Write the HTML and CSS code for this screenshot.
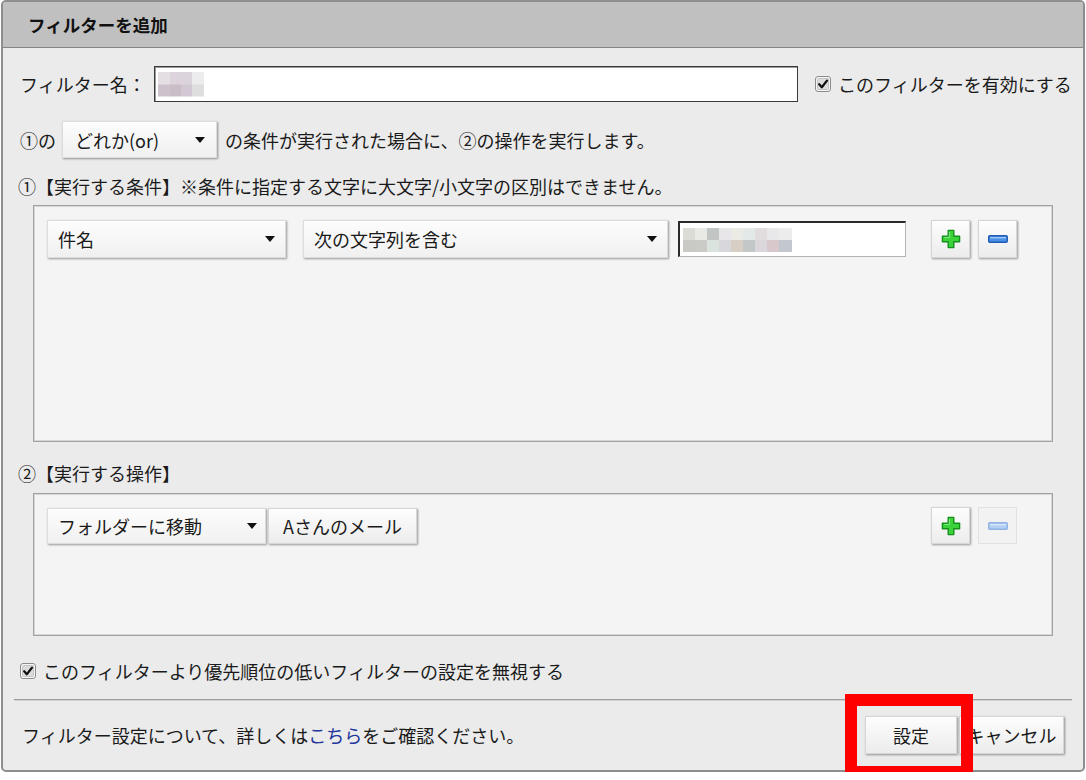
FILE: index.html
```html
<!DOCTYPE html>
<html lang="ja">
<head>
<meta charset="utf-8">
<title>フィルターを追加</title>
<link rel="stylesheet" href="styles.css">
</head>
<body>
<div class="dialog">
  <div class="dialog-header"><h1 class="dialog-title">フィルターを追加</h1></div>
  <div class="dialog-body">
    <div class="row row-name">
      <span class="name-label">フィルター名：</span>
      <div class="name-input"><span class="blur blur-name"></span></div>
      <span class="check check-enable">
        <svg class="checkbox" viewBox="0 0 16 16" width="16" height="16"><rect x="0.5" y="0.5" width="15" height="15" rx="2.5" fill="#f6f6f6" stroke="#8c8c8c"/><rect x="2.5" y="2.5" width="11" height="11" rx="1" fill="#dcdcdc" stroke="#c4c4c4"/><path d="M4.2 8.3 L6.8 11.2 L12 4.6" fill="none" stroke="#111" stroke-width="2.3" stroke-linecap="round" stroke-linejoin="round"/></svg>
        <span>このフィルターを有効にする</span>
      </span>
    </div>
    <div class="row row-mode">
      <span class="mode-prefix">①の</span>
      <div class="select select-mode"><span>どれか(or)</span><i class="caret"></i></div>
      <span class="mode-text">の条件が実行された場合に、②の操作を実行します。</span>
    </div>
    <div class="section-label section-cond">①【実行する条件】※条件に指定する文字に大文字/小文字の区別はできません。</div>
    <div class="box box-cond">
      <div class="rule-row">
        <div class="select select-field"><span>件名</span><i class="caret"></i></div>
        <div class="select select-op"><span>次の文字列を含む</span><i class="caret"></i></div>
        <div class="cond-input"><span class="blur blur-cond"></span></div>
        <div class="icon-buttons">
          <button class="icon-btn" type="button" aria-label="追加"><svg viewBox="0 0 20 20" width="20" height="20"><path d="M7.2 1.4h5.6v5.8h5.8v5.6h-5.8v5.8h-5.6v-5.8h-5.8v-5.6h5.8z" fill="#3ad33a" stroke="#15901a" stroke-width="1.4" stroke-linejoin="round"/><path d="M8.4 3v5.4h-5.2" fill="none" stroke="#8af08a" stroke-width="0.9"/></svg></button>
          <button class="icon-btn" type="button" aria-label="削除"><svg viewBox="0 0 20 8" width="20" height="8"><rect x="0.7" y="0.7" width="18.6" height="6.6" rx="1.2" fill="#4a90e6" stroke="#1f5cb4" stroke-width="1.4"/><rect x="2" y="2" width="16" height="1.4" fill="#9cc6f6"/></svg></button>
        </div>
      </div>
    </div>
    <div class="section-label section-act">②【実行する操作】</div>
    <div class="box box-act">
      <div class="rule-row">
        <div class="select select-action"><span>フォルダーに移動</span><i class="caret"></i></div>
        <button class="btn folder-btn" type="button">Aさんのメール</button>
        <div class="icon-buttons">
          <button class="icon-btn" type="button" aria-label="追加"><svg viewBox="0 0 20 20" width="20" height="20"><path d="M7.2 1.4h5.6v5.8h5.8v5.6h-5.8v5.8h-5.6v-5.8h-5.8v-5.6h5.8z" fill="#3ad33a" stroke="#15901a" stroke-width="1.4" stroke-linejoin="round"/><path d="M8.4 3v5.4h-5.2" fill="none" stroke="#8af08a" stroke-width="0.9"/></svg></button>
          <button class="icon-btn icon-btn-disabled" type="button" aria-label="削除" disabled><svg viewBox="0 0 20 8" width="20" height="8"><rect x="0.7" y="0.7" width="18.6" height="6.6" rx="1.2" fill="#b3cff3" stroke="#8eb2e2" stroke-width="1.4"/><rect x="2" y="2" width="16" height="1.4" fill="#d6e6fa"/></svg></button>
        </div>
      </div>
    </div>
    <div class="row row-ignore">
      <span class="check">
        <svg class="checkbox" viewBox="0 0 16 16" width="16" height="16"><rect x="0.5" y="0.5" width="15" height="15" rx="2.5" fill="#f6f6f6" stroke="#8c8c8c"/><rect x="2.5" y="2.5" width="11" height="11" rx="1" fill="#dcdcdc" stroke="#c4c4c4"/><path d="M4.2 8.3 L6.8 11.2 L12 4.6" fill="none" stroke="#111" stroke-width="2.3" stroke-linecap="round" stroke-linejoin="round"/></svg>
        <span>このフィルターより優先順位の低いフィルターの設定を無視する</span>
      </span>
    </div>
    <div class="divider"></div>
    <div class="footer">
      <p class="help">フィルター設定について、詳しくは<a class="help-link" href="#">こちら</a>をご確認ください。</p>
      <div class="footer-buttons">
        <span class="ok-wrap">
          <button class="btn ok-btn" type="button">設定</button>
          <span class="highlight"></span>
        </span>
        <button class="btn cancel-btn" type="button">キャンセル</button>
      </div>
    </div>
  </div>
</div>
</body>
</html>
```
FILE: styles.css
```css
html, body {
  margin: 0;
  padding: 0;
  background: #ffffff;
}

body {
  font-family: "Noto Sans CJK JP", "Noto Sans", sans-serif;
  font-size: 18px;
  color: #1a1a1a;
}

button {
  font-family: inherit;
  font-size: inherit;
  color: inherit;
  padding: 0;
  margin: 0;
}

.dialog {
  position: relative;
  margin-left: 1px;
  width: 1084px;
  box-sizing: border-box;
  border: 2px solid #8e8e8e;
  border-radius: 5px;
  background: #ebebeb;
}

.dialog-header {
  height: 45px;
  background: #c0c0c0;
  border-bottom: 1px solid #858585;
  border-radius: 3px 3px 0 0;
  display: flex;
  align-items: center;
  padding-left: 25px;
}

.dialog-title {
  margin: 0;
  font-size: 17.5px;
  font-weight: bold;
  color: #111;
  line-height: 24px;
}

.dialog-body {
  padding: 0 11px 16px;
}

.row {
  display: flex;
  align-items: center;
  padding-left: 6px;
}

.row-name {
  margin-top: 18px;
  height: 36px;
}

.name-label {
  width: 134px;
  flex: none;
}

.name-input {
  width: 644px;
  height: 36px;
  box-sizing: border-box;
  border: 1px solid #3a3a3a;
  box-shadow: inset 1px 1px 0 #9a9a9a;
  background: #fff;
  display: flex;
  align-items: center;
  padding-left: 3px;
}

.blur {
  display: block;
}

.blur-name {
  width: 46px;
  height: 25px;
  background:
    linear-gradient(to right, #e3dfe3 0 12px, #dcd3dc 12px 23px, #dcd4dd 23px 34px, #ececee 34px 46px) top / 100% 50% no-repeat,
    linear-gradient(to right, #cdc2cc 0 12px, #c9bdc8 12px 23px, #d2c8d3 23px 34px, #dedede 34px 46px) bottom / 100% 50% no-repeat;
}

.check {
  display: flex;
  align-items: center;
}

.check-enable {
  margin-left: 17px;
}

.check-enable .checkbox {
  margin-right: 7px;
}

.checkbox {
  flex: none;
  display: block;
}

.row-mode {
  margin-top: 19px;
  height: 37px;
}

.mode-prefix {
  width: 42px;
  flex: none;
}

.select {
  display: flex;
  align-items: center;
  justify-content: space-between;
  box-sizing: border-box;
  background: linear-gradient(#fdfdfd, #f0f0f0);
  border: 1px solid #dcdcdc;
  box-shadow: 1px 1px 2px rgba(0, 0, 0, 0.38);
  padding: 0 10px 0 10px;
  flex: none;
}

.caret {
  width: 0;
  height: 0;
  border-left: 5px solid transparent;
  border-right: 5px solid transparent;
  border-top: 6px solid #111;
  flex: none;
}

.select-mode {
  width: 155px;
  height: 37px;
  padding-left: 12px;
  padding-right: 11px;
}

.mode-text {
  margin-left: 8px;
}

.section-label {
  height: 24px;
  line-height: 24px;
  padding-left: 4px;
  white-space: nowrap;
}

.section-cond {
  margin-top: 16px;
}

.section-act {
  margin-top: 19px;
}

.box {
  margin-left: 19px;
  width: 1020px;
  box-sizing: border-box;
  border: 1px solid #a2a2a2;
  box-shadow: inset 0 0 0 1px #d6d6d6;
  background: #f4f4f4;
}

.box-cond {
  margin-top: 7px;
  height: 237px;
}

.box-act {
  margin-top: 8px;
  height: 143px;
}

.rule-row {
  display: flex;
  align-items: center;
  padding: 14px 35px 0 13px;
}

.select-field {
  width: 239px;
  height: 38px;
}

.select-op {
  width: 365px;
  height: 38px;
  margin-left: 17px;
}

.cond-input {
  margin-left: 10px;
  width: 228px;
  height: 36px;
  box-sizing: border-box;
  border-style: solid;
  border-width: 2px 1px 1px 2px;
  border-color: #2a2a2a #b4b4b4 #b4b4b4 #2a2a2a;
  background: #fff;
  display: flex;
  align-items: center;
  padding-left: 3px;
}

.blur-cond {
  width: 109px;
  height: 24px;
  background:
    linear-gradient(to right, #dcdcd7 0 12px, #e9e9e6 12px 24px, #c1c5c3 24px 36px, #e8e6e8 36px 48px, #eceae5 48px 60px, #e3e8e8 60px 72px, #e1dcdd 72px 84px, #e8e8ea 84px 96px, #ececec 96px 109px) top / 100% 50% no-repeat,
    linear-gradient(to right, #c9c9c5 0 12px, #cacac6 12px 24px, #dbe3df 24px 36px, #d7d7dc 36px 48px, #d7cfc3 48px 60px, #c3c7c8 60px 72px, #dbd6db 72px 84px, #d8c8cc 84px 96px, #c3c7d0 96px 109px) bottom / 100% 50% no-repeat;
}

.icon-buttons {
  margin-left: auto;
  display: flex;
  gap: 8px;
}

.icon-btn {
  width: 39px;
  height: 38px;
  box-sizing: border-box;
  background: linear-gradient(#fdfdfd, #ececec);
  border: 1px solid #d6d6d6;
  box-shadow: 1px 1px 2px rgba(0, 0, 0, 0.38);
  display: flex;
  align-items: center;
  justify-content: center;
}

.icon-btn svg {
  display: block;
}

.icon-btn-disabled {
  background: #f2f2f2;
  border-color: #e2e2e2;
  box-shadow: none;
}

.box-act .rule-row {
  align-items: flex-start;
}

.box-act .icon-btn {
  height: 37px;
  margin-top: -1px;
}

.select-action {
  width: 219px;
  height: 36px;
  padding-right: 8px;
}

.btn {
  box-sizing: border-box;
  background: linear-gradient(#fdfdfd, #ececec);
  border: 1px solid #d6d6d6;
  box-shadow: 1px 1px 2px rgba(0, 0, 0, 0.38);
  display: flex;
  align-items: center;
  justify-content: center;
  line-height: 1;
}

.folder-btn {
  margin-left: 2px;
  width: 149px;
  height: 36px;
}

.row-ignore {
  margin-top: 23px;
  height: 24px;
}

.row-ignore .checkbox {
  margin-right: 7px;
}

.divider {
  margin-top: 16px;
  border-top: 1px solid #9c9c9c;
  border-bottom: 1px solid #d2d2d2;
}

.footer {
  margin-top: 15px;
  height: 38px;
  display: flex;
  align-items: center;
  padding: 0 8px;
}

.help {
  margin: 0;
}

.help-link {
  color: #22369c;
  text-decoration: none;
}

.footer-buttons {
  margin-left: auto;
  display: flex;
  gap: 2px;
}

.ok-wrap {
  position: relative;
  display: block;
}

.ok-btn {
  width: 92px;
  height: 38px;
}

.cancel-btn {
  width: 105px;
  height: 38px;
}

.highlight {
  position: absolute;
  left: -20px;
  top: -22px;
  width: 128px;
  height: 84px;
  box-sizing: border-box;
  border: 12px solid #ff0000;
  pointer-events: none;
}
```
